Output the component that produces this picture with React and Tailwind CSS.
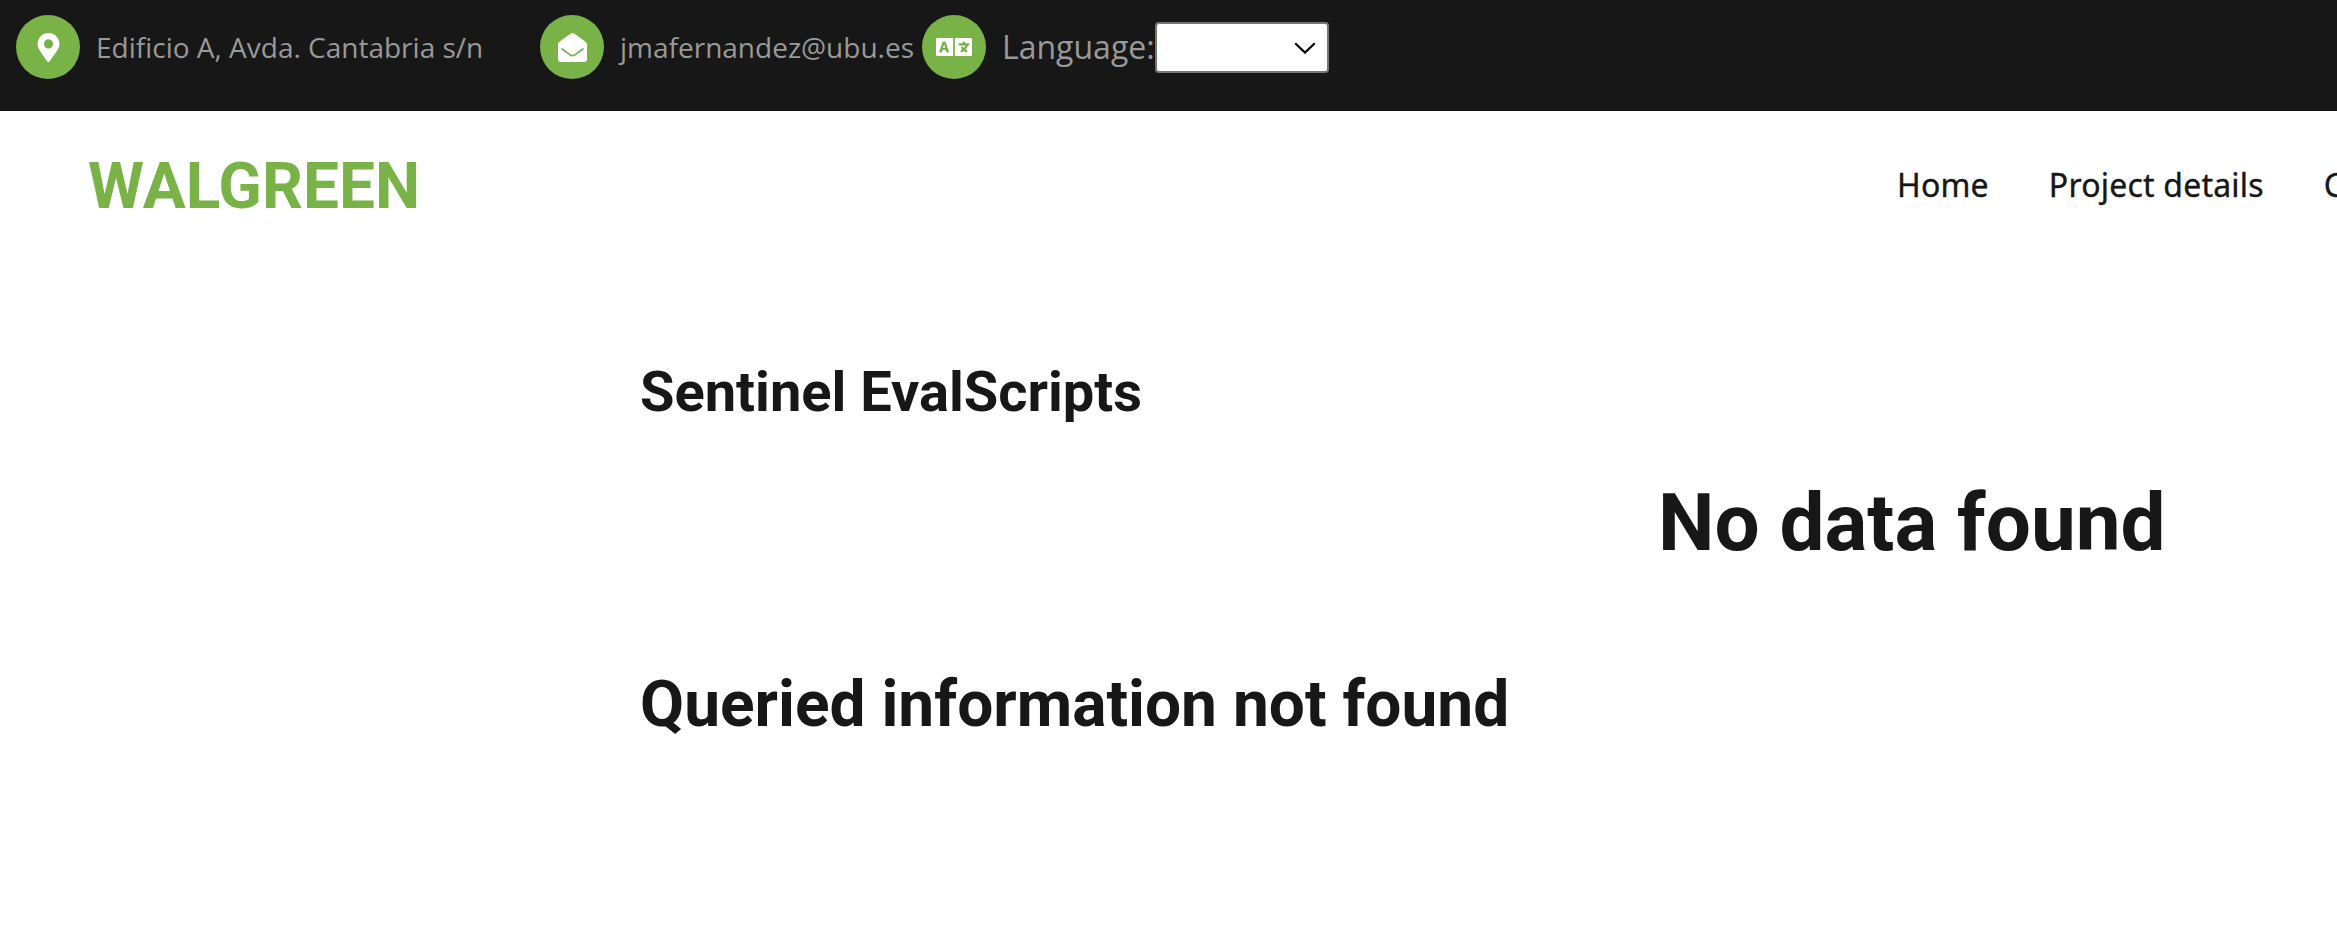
import { FaMapMarkerAlt, FaEnvelopeOpen, FaLanguage } from "react-icons/fa";

function Circle({ children }) {
  return (
    <span className="flex size-16 shrink-0 items-center justify-center rounded-full bg-[#79b347] text-[28px] text-white">
      {children}
    </span>
  );
}

function TopBar() {
  return (
    <div className="flex h-[111px] items-start bg-[#171717] pt-[15px] pl-4 text-[28px] text-[#999999]">
      <div className="flex h-16 w-[524px] shrink-0 items-center gap-4">
        <Circle><FaMapMarkerAlt className="size-[29px]" /></Circle>
        <span className="whitespace-nowrap">Edificio A, Avda. Cantabria s/n</span>
      </div>
      <div className="flex h-16 w-[382px] shrink-0 items-center gap-4">
        <Circle><FaEnvelopeOpen className="size-[29px]" /></Circle>
        <span className="whitespace-nowrap">jmafernandez@ubu.es</span>
      </div>
      <div className="flex h-16 shrink-0 items-center">
        <Circle><FaLanguage className="size-9" /></Circle>
        <label className="w-[169px] pl-4 text-[32px] whitespace-nowrap">Language:</label>
        <button
          type="button"
          aria-label="Language"
          className="mt-px flex h-[51px] w-[174px] items-center justify-end rounded-[4px] border-2 border-[#767676] bg-white pr-[11px]"
        >
          <svg viewBox="0 0 22 12" className="h-3 w-[22px]" fill="none" stroke="#000" strokeWidth="2.2">
            <path d="M1.2 1.2 L11 10.6 L20.8 1.2" />
          </svg>
        </button>
      </div>
    </div>
  );
}

function Header() {
  return (
    <header className="flex h-[150px] items-center overflow-hidden bg-white">
      <a className="w-[1808px] shrink-0 pt-[2px] pl-[88px] font-[Roboto,sans-serif] text-[64px] leading-none font-bold text-[#79b347]">
        WALGREEN
      </a>
      <nav className="flex shrink-0 gap-15 pb-[3px] font-['Noto_Sans',sans-serif] text-[32px] tracking-[0.2px] whitespace-nowrap text-[#171717] [-webkit-text-stroke:0.35px_#171717]">
        <a className="pl-[89px]">Home</a>
        <a>Project details</a>
        <a>Contact</a>
      </nav>
    </header>
  );
}

export default function App() {
  return (
    <div className="h-[950px] w-[2337px] overflow-hidden bg-white font-['Open_Sans',sans-serif] text-[#171717]">
      <TopBar />
      <Header />
      <main className="pl-[640px] font-[Roboto,sans-serif] font-bold whitespace-nowrap">
        <h2 className="pt-[97px] text-[56px] leading-[68px]">Sentinel EvalScripts</h2>
        <h1 className="pt-[49px] pl-[1018px] text-[80px] leading-[96px]">No data found</h1>
        <h2 className="pt-[95px] text-[64px] leading-[77px]">Queried information not found</h2>
      </main>
    </div>
  );
}
